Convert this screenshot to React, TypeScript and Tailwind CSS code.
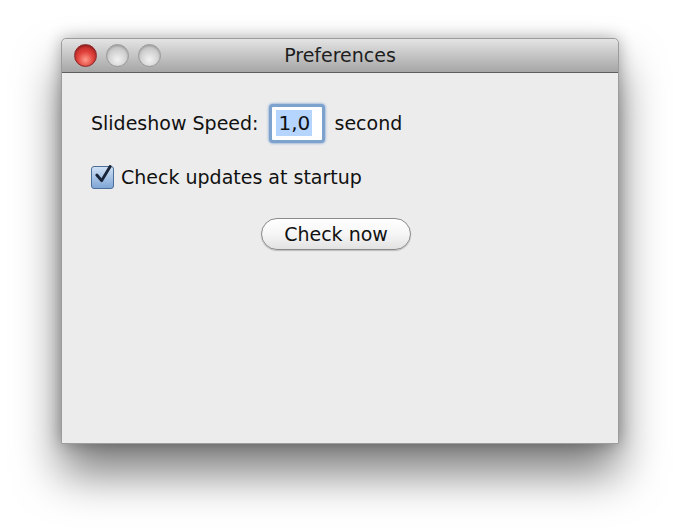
import React from 'react';

const font = { fontFamily: '"DejaVu Sans", "Liberation Sans", sans-serif' };

function Light({ red }: { red?: boolean }) {
  return (
    <div
      className={
        red
          ? 'w-[23px] h-[23px] rounded-full border border-[#8a2a2a] bg-[radial-gradient(circle_at_50%_70%,#ff9a8a_0%,#e0403a_45%,#a81c1c_100%)] shadow-[inset_0_1px_2px_rgba(0,0,0,0.3)]'
          : 'w-[23px] h-[23px] rounded-full border border-[#9a9a9a] bg-[radial-gradient(circle_at_50%_70%,#f2f2f2_0%,#d2d2d2_50%,#b0b0b0_100%)] shadow-[inset_0_1px_2px_rgba(0,0,0,0.2)]'
      }
    />
  );
}

export default function App() {
  return (
    <div className="w-[680px] h-[529px] bg-white pt-[38px] pl-[61px]" style={font}>
      <div className="w-[558px] h-[406px] flex flex-col bg-[#ececec] border border-[#9c9c9c] rounded-t-[5px] shadow-[0_30px_45px_rgba(0,0,0,0.5),0_0_16px_rgba(0,0,0,0.3)]">
        {/* title bar */}
        <div className="h-[34px] relative flex items-center rounded-t-[5px] bg-gradient-to-b from-[#e4e4e4] to-[#a6a6a6] border-b border-[#5e5e5e]">
          <div className="flex items-center gap-[9px] pl-[12px]">
            <Light red />
            <Light />
            <Light />
          </div>
          <div className="absolute inset-0 flex items-center justify-center text-[19px] text-[#1e1e1e]">
            Preferences
          </div>
        </div>

        {/* content */}
        <div className="flex flex-col pl-[29px] pt-[28px] text-[19px] text-[#111]">
          <div className="flex items-center h-[44px]">
            <span>Slideshow Speed:</span>
            <div className="ml-[11px] w-[56px] h-[39px] flex items-center px-[4px] bg-white border-[3px] border-[#7da2ce] rounded-[4px] shadow-[0_0_3px_#5f8fc8]">
              <span className="bg-[#b5d5ff] px-[2px] leading-[26px] text-[20px]">1,0</span>
            </div>
            <span className="ml-[9px]">second</span>
          </div>

          <div className="flex items-center mt-[18px] h-[28px]">
            <div className="w-[23px] h-[23px] flex items-center justify-center rounded-[3px] border border-[#4a6d9a] bg-gradient-to-b from-[#cfe0f4] to-[#7fa6d6]">
              <svg width="20" height="20" viewBox="0 0 20 20" className="-mt-[4px] ml-[2px]">
                <path d="M3 10 L8 16 L17 1" fill="none" stroke="#1a2438" strokeWidth="3" strokeLinecap="round" strokeLinejoin="round" />
              </svg>
            </div>
            <span className="ml-[7px]">Check updates at startup</span>
          </div>

          <div className="flex mt-[27px]">
            <button className="ml-[170px] w-[150px] h-[32px] rounded-full border border-[#8a8a8a] bg-gradient-to-b from-white via-[#f6f6f6] to-[#e2e2e2] shadow-[0_1px_1px_rgba(0,0,0,0.2)] text-[19px] text-[#111]">
              Check now
            </button>
          </div>
        </div>
      </div>
    </div>
  );
}
